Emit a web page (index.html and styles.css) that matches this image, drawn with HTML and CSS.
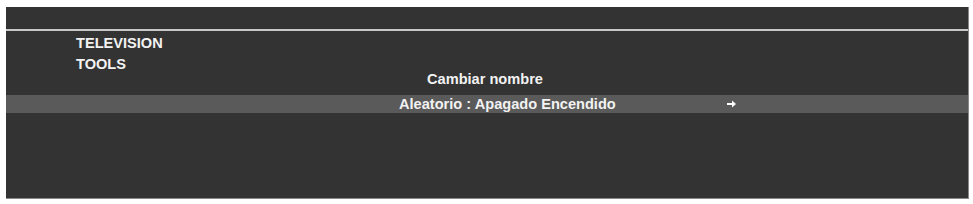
FILE: index.html
```html
<!DOCTYPE html>
<html lang="es">
<head>
  <meta charset="UTF-8">
  <title>Menu TV</title>
  <link rel="stylesheet" href="styles.css">
</head>
<body>
  <div class="tv-screen">
    <div class="top-bar"></div>
    <div class="menu-path">
      <p>TELEVISION</p>
      <p>TOOLS</p>
    </div>
    <div class="menu-item title-item">Cambiar nombre</div>
    <div class="menu-item selected">
      <span class="item-label">Aleatorio : Apagado Encendido</span>
      <svg class="arrow" width="9" height="8" viewBox="0 0 9 8">
        <path d="M0 3h5V0.5L9 4L5 7.5V5H0z" fill="#fff"/>
      </svg>
    </div>
  </div>
</body>
</html>
```

FILE: styles.css
```css
* {
  margin: 0;
  padding: 0;
  box-sizing: border-box;
}
body {
  background: #fff;
  font-family: "Liberation Sans", Arial, sans-serif;
  font-weight: bold;
  font-size: 14.6px;
  color: #f2f2f2;
}
.tv-screen {
  margin: 7px 4px 0 6px;
  height: 192px;
  background: #333;
  border-right: 1px solid #888;
  border-bottom: 1px solid #888;
}
.top-bar {
  height: 24px;
  border-bottom: 2px solid #c8c8c8;
}
.menu-path {
  padding: 2px 0 0 70px;
  line-height: 21px;
}
.menu-item {
  line-height: 18px;
}
.title-item {
  margin-top: -5px;
  padding-left: 421px;
}
.selected {
  display: flex;
  align-items: center;
  margin-top: 7px;
  padding-left: 393px;
  background: #5a5a5a;
}
.item-label {
  width: 328px;
}
.arrow {
  display: block;
}
```
